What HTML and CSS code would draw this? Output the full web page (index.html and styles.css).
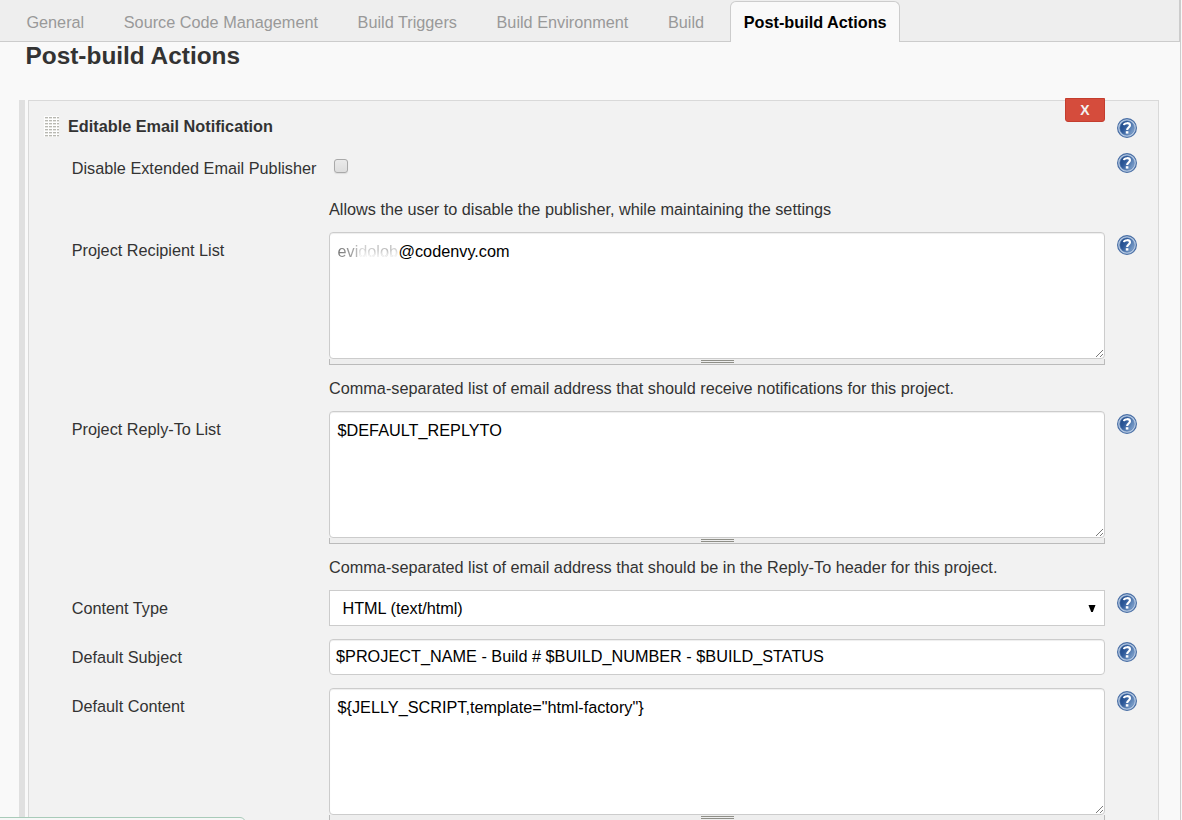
FILE: index.html
```html
<!DOCTYPE html>
<html lang="en">
<head>
<meta charset="utf-8">
<title>Post-build Actions</title>
<link rel="stylesheet" href="styles.css">
</head>
<body>
<svg class="defs" aria-hidden="true">
  <defs>
    <linearGradient id="ball" x1="0" y1="0.2" x2="1" y2="0.8">
      <stop offset="0" stop-color="#204a87"/><stop offset="0.35" stop-color="#2c5899"/><stop offset="1" stop-color="#86a8d0"/>
    </linearGradient>
    <symbol id="help" viewBox="0 0 20 20">
      <circle cx="10" cy="10" r="9.4" fill="#b9cce4" stroke="#4a6fa5" stroke-width="1.2"/>
      <circle cx="10" cy="10" r="7.3" fill="url(#ball)" stroke="#5d82b5" stroke-width="0.6"/>
      <path d="M6.9 7.1C7.4 4.7 12.9 4.3 13 7.3C13.1 9.4 10.2 9.6 10.1 12" fill="none" stroke="#fff" stroke-width="2.1"/>
      <rect x="8.8" y="13.2" width="2.6" height="2.4" fill="#fff"/>
    </symbol>
    <symbol id="grip" viewBox="0 0 9 9">
      <path d="M1 8L8 1M5 8L8 5" fill="none" stroke="#444" stroke-width="1" stroke-dasharray="1 .41"/>
    </symbol>
  </defs>
</svg>
<div class="page">
  <nav class="tabs">
    <a class="tab">General</a><a class="tab">Source Code Management</a><a class="tab">Build Triggers</a><a class="tab">Build Environment</a><a class="tab">Build</a><a class="tab active">Post-build Actions</a>
  </nav>
  <h1 class="heading">Post-build Actions</h1>
  <div class="section">
    <div class="rail"></div>
    <form class="panel">
      <button class="remove" type="button">X</button>
      <header class="panel-head">
        <span class="drag"></span>
        <b class="panel-title">Editable Email Notification</b>
        <svg class="help"><use href="#help"/></svg>
      </header>

      <div class="row">
        <label class="label">Disable Extended Email Publisher</label>
        <div class="control"><div class="check-line"><span class="checkbox"></span></div>
          <p class="desc">Allows the user to disable the publisher, while maintaining the settings</p></div>
        <svg class="help"><use href="#help"/></svg>
      </div>

      <div class="row">
        <label class="label">Project Recipient List</label>
        <div class="control">
          <div class="area"><span class="faded">evidolob</span>@codenvy.com<svg class="grip"><use href="#grip"/></svg></div>
          <div class="handle"><span class="bars"></span></div>
          <p class="desc">Comma-separated list of email address that should receive notifications for this project.</p>
        </div>
        <svg class="help"><use href="#help"/></svg>
      </div>

      <div class="row">
        <label class="label">Project Reply-To List</label>
        <div class="control">
          <div class="area">$DEFAULT_REPLYTO<svg class="grip"><use href="#grip"/></svg></div>
          <div class="handle"><span class="bars"></span></div>
          <p class="desc">Comma-separated list of email address that should be in the Reply-To header for this project.</p>
        </div>
        <svg class="help"><use href="#help"/></svg>
      </div>

      <div class="row spaced">
        <label class="label">Content Type</label>
        <div class="control"><div class="select"><span>HTML (text/html)</span><svg class="arrow" viewBox="0 0 8 7"><path d="M0.5 0H7.5L4.8 7H3.2Z"/></svg></div></div>
        <svg class="help"><use href="#help"/></svg>
      </div>

      <div class="row spaced">
        <label class="label">Default Subject</label>
        <div class="control"><div class="input">$PROJECT_NAME - Build # $BUILD_NUMBER - $BUILD_STATUS</div></div>
        <svg class="help"><use href="#help"/></svg>
      </div>

      <div class="row">
        <label class="label">Default Content</label>
        <div class="control">
          <div class="area">${JELLY_SCRIPT,template="html-factory"}<svg class="grip"><use href="#grip"/></svg></div>
          <div class="handle"><span class="bars"></span></div>
        </div>
        <svg class="help"><use href="#help"/></svg>
      </div>
    </form>
  </div>
  <div class="status"></div>
</div>
</body>
</html>
```
FILE: styles.css
```css
* { box-sizing: border-box; }
body { margin: 0; background: #f9f9f9; color: #333; font: 16.25px/20px "Liberation Sans", Arial, sans-serif; overflow: hidden; }
.defs { position: absolute; width: 0; height: 0; }
.page { position: relative; width: 1181px; height: 820px; overflow: hidden; border-right: 1px solid #ccc; display: flex; flex-direction: column; }
.tabs { display: flex; flex: none; gap: 12.4px; height: 42px; padding: 1px 0 0 12.8px; background: #eee; border-bottom: 1px solid #ccc; border-right: 1px solid #ccc; }
.tab { height: 41px; padding: 10px 12.6px 0; border: 1px solid transparent; border-bottom: 0; color: #999; white-space: nowrap; }
.tab.active { height: 41px; margin-bottom: -1px; background: #f9f9f9; border-color: #ccc; border-radius: 6px 6px 0 0; color: #000; font-weight: bold; }
.heading { flex: none; margin: 0; padding-left: 25.5px; height: 58px; font-size: 24.4px; line-height: 28px; }
.section { display: flex; flex: none; height: 740px; padding-left: 19px; gap: 3px; }
.rail { width: 6px; background: #e0e0e0; }
.panel { position: relative; width: 1131px; border: 1px solid #d9d9d9; background: #f2f2f2; }
.remove { position: absolute; left: 1036px; top: -3px; width: 40px; height: 24px; padding: 0; border: 1px solid #c43d2e; border-radius: 0 0 3px 3px; background: #d54c3c; color: #f2f2f2; font: bold 14px/22px "Liberation Sans", Arial, sans-serif; }
.panel-head { display: grid; grid-template-columns: 24px 1049px 20px; height: 49px; padding: 15px 0 0 15px; }
.drag { width: 15px; height: 21px; background-color: #fdfdfd; background-image: linear-gradient(90deg, #fdfdfd 1px, transparent 1px), linear-gradient(#fdfdfd 1px, #b8b8b2 1px, #b8b8b2 2px, #e4e4e0 2px); background-size: 4px 3px; }
.panel-title { line-height: 21px; }
.panel-head .help { margin-top: 2px; }
.row { display: grid; grid-template-columns: 257px 776px 20px; padding-left: 43px; align-items: start; }
.row .help { margin: 3px 0 0 12px; }
.spaced { padding-bottom: 13px; }
.help { width: 20px; height: 20px; display: block; }
.label { padding-top: 8px; white-space: nowrap; margin-left: -.3px; }
.check-line { height: 36px; padding: 9px 0 0 5px; }
.checkbox { display: block; width: 14px; height: 14px; border: 1px solid #a9a9a9; border-radius: 3px; background: linear-gradient(#eaeaea, #ddd); box-shadow: 0 1px 1px #ddd; }
.desc { margin: 0; height: 46px; padding-top: 13px; white-space: nowrap; }
.area, .input, .select { background: #fff; border: 1px solid #ccc; color: #000; white-space: nowrap; }
.area { position: relative; height: 127px; padding: 8px 7.5px; border-radius: 4px; box-shadow: inset 0 1px 1px #eee; }
.faded { display: inline-block; width: 61px; color: transparent; background: linear-gradient(transparent 45%, #fff 80%) 20px 0 no-repeat, linear-gradient(90deg, #777, #aaa 17px, #d5d5d5 22px, #bbb 50px, #ddd); -webkit-background-clip: text; background-clip: text; vertical-align: top; }
.grip { position: absolute; right: 0; bottom: 0; width: 9px; height: 9px; }
.handle { height: 6px; border: 1px solid #bbb; border-top: 0; background: #eee; display: flex; justify-content: center; padding-top: 1px; }
.bars { width: 33px; height: 3px; border: solid #8f8f88; border-width: 1px 0; }
.select { display: flex; align-items: center; justify-content: space-between; height: 36px; padding: 0 8px 0 12.4px; }
.select span { margin-top: -1px; }
.arrow { width: 8px; height: 7px; }
.input { height: 36px; padding: 6px; border-radius: 4px; box-shadow: inset 0 1px 1px #eee; }
.status { position: absolute; left: -1px; top: 817px; width: 247px; height: 20px; border: 1px solid #a8cbb9; border-radius: 0 6px 0 0; background: #f7f7f7; }
```
